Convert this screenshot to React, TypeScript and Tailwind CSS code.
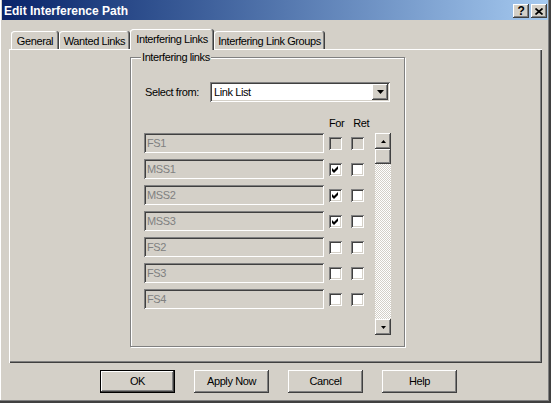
// Edit Interference Path — classic Win2k property sheet dialog

const raised =
  'bg-[#d4d0c8] shadow-[inset_-1px_-1px_#404040,inset_1px_1px_#ffffff,inset_-2px_-2px_#808080]';
const sunken =
  'shadow-[inset_1px_1px_#808080,inset_-1px_-1px_#ffffff,inset_2px_2px_#404040,inset_-2px_-2px_#d4d0c8]';

const links = [
  { name: 'FS1', fwd: false, disabled: true },
  { name: 'MSS1', fwd: true, disabled: false },
  { name: 'MSS2', fwd: true, disabled: false },
  { name: 'MSS3', fwd: true, disabled: false },
  { name: 'FS2', fwd: false, disabled: false },
  { name: 'FS3', fwd: false, disabled: false },
  { name: 'FS4', fwd: false, disabled: false },
];

function Check({ checked, disabled }: { checked: boolean; disabled: boolean }) {
  return (
    <div className={`w-[13px] h-[13px] ${sunken} ${disabled ? 'bg-[#d4d0c8]' : 'bg-white'}`}>
      {checked && (
        <svg width="13" height="13" viewBox="0 0 13 13">
          <polygon points="3,5 5,7 9,3 9,6 5,10 3,8" fill="#000" />
        </svg>
      )}
    </div>
  );
}

function Arrow({ up }: { up?: boolean }) {
  return (
    <svg width="7" height="4" viewBox="0 0 7 4">
      <polygon points={up ? '3.5,0 7,4 0,4' : '0,0 7,0 3.5,4'} fill="#000" />
    </svg>
  );
}

function Button({ label, primary }: { label: string; primary?: boolean }) {
  return (
    <div className={`w-[75px] h-[23px] ${primary ? 'border border-black' : ''}`}>
      <div className={`w-full h-full flex items-center justify-center ${raised}`}>{label}</div>
    </div>
  );
}

function Tab({ label, width, active }: { label: string; width: string; active?: boolean }) {
  return (
    <div
      className={`${width} ${active ? 'h-[21px] -mb-[1px] relative z-10' : 'h-[18px]'} rounded-t-[3px] bg-[#d4d0c8] text-center pt-[4px] leading-[13px] shadow-[inset_-1px_0_#404040,inset_1px_1px_#ffffff,inset_-2px_0_#808080]`}
    >
      {label}
    </div>
  );
}

export default function App() {
  return (
    <div
      className="w-[551px] h-[403px] bg-[#d4d0c8] pl-[2px] pr-[3px] text-[11px] tracking-[-0.4px] text-black shadow-[inset_-2px_-2px_#404040,inset_-3px_-3px_#808080,inset_1px_0_#ffffff] flex flex-col"
      style={{ fontFamily: '"Liberation Sans", Arial, sans-serif' }}
    >
      {/* Title bar */}
      <div className="h-[20px] flex items-start justify-between bg-gradient-to-r from-[#0a246a] to-[#a6caf0]">
        <span className="pl-[2px] pt-[5px] leading-[13px] text-[12px] font-bold tracking-normal text-white">
          Edit Interference Path
        </span>
        <div className="flex gap-[2px] mt-[4px] mr-[1px]">
          <div className={`w-[16px] h-[14px] flex items-center justify-center text-[12px] font-bold leading-none ${raised}`}>
            ?
          </div>
          <div className={`w-[16px] h-[14px] flex items-center justify-center ${raised}`}>
            <svg width="8" height="7" viewBox="0 0 8 7">
              <path d="M0.5 0.5 L7.5 6.5 M7.5 0.5 L0.5 6.5" stroke="#000" strokeWidth="1.7" />
            </svg>
          </div>
        </div>
      </div>

      {/* Tabs */}
      <div className="ml-[7px] w-[533px] mt-[9px]">
        <div className="h-[20px] pl-[2px] flex items-end">
          <Tab label="General" width="w-[48px]" />
          <Tab label="Wanted Links" width="w-[71px]" />
          <Tab label="Interfering Links" width="w-[84px]" active />
          <Tab label="Interfering Link Groups" width="w-[111px]" />
        </div>

        {/* Panel */}
        <div className="h-[314px] pl-[121px] pt-[8px] shadow-[inset_1px_1px_#ffffff,inset_-1px_-1px_#404040,inset_-2px_-2px_#808080]">
          <div className="relative w-[275px] h-[290px] border border-[#808080] shadow-[1px_1px_0_#ffffff,inset_1px_1px_0_#ffffff]">
            <span className="absolute left-[10px] -top-[7px] px-[1px] bg-[#d4d0c8] leading-[13px]">Interfering links</span>

            <div className="pl-[13px] pt-[24px]">
              <div className="flex items-center h-[20px]">
                <span className="w-[66px] pl-[1px]">Select from:</span>
                <div className={`w-[180px] h-[20px] bg-white flex items-center justify-between p-[2px] ${sunken}`}>
                  <span className="pl-[2px]">Link List</span>
                  <div className={`w-[16px] h-[16px] flex items-center justify-center ${raised}`}>
                    <Arrow />
                  </div>
                </div>
              </div>

              <div className="flex h-[13px] mt-[15px] mb-[3px] leading-[13px]">
                <span className="ml-[185px]">For</span>
                <span className="ml-[9px]">Ret</span>
              </div>

              <div className="flex">
                <div className="flex flex-col gap-[6px]">
                  {links.map((l) => (
                    <div key={l.name} className="flex items-center">
                      <div className={`w-[180px] h-[20px] pl-[3px] flex items-center text-[#808080] ${sunken}`}>
                        {l.name}
                      </div>
                      <div className="ml-[5px]">
                        <Check checked={l.fwd} disabled={l.disabled} />
                      </div>
                      <div className="ml-[9px]">
                        <Check checked={false} disabled={l.disabled} />
                      </div>
                    </div>
                  ))}
                </div>

                {/* Scrollbar */}
                <div className="ml-[11px] w-[16px] h-[202px] flex flex-col">
                  <div className={`w-[16px] h-[16px] flex items-center justify-center ${raised}`}>
                    <svg width="5" height="3" viewBox="0 0 5 3">
                      <polygon points="2.5,0 5,3 0,3" fill="#000" />
                    </svg>
                  </div>
                  <div className={`w-[16px] h-[15px] ${raised}`} />
                  <div className="flex-1 bg-[image:repeating-conic-gradient(#d4d0c8_0_25%,#ffffff_0_50%)] bg-[length:2px_2px]" />
                  <div className={`w-[16px] h-[16px] flex items-center justify-center ${raised}`}>
                    <svg width="5" height="3" viewBox="0 0 5 3">
                      <polygon points="0,0 5,0 2.5,3" fill="#000" />
                    </svg>
                  </div>
                </div>
              </div>
            </div>
          </div>
        </div>
      </div>

      {/* Buttons */}
      <div className="flex gap-[19px] pl-[98px] mt-[7px]">
        <Button label="OK" primary />
        <Button label="Apply Now" />
        <Button label="Cancel" />
        <Button label="Help" />
      </div>
    </div>
  );
}
